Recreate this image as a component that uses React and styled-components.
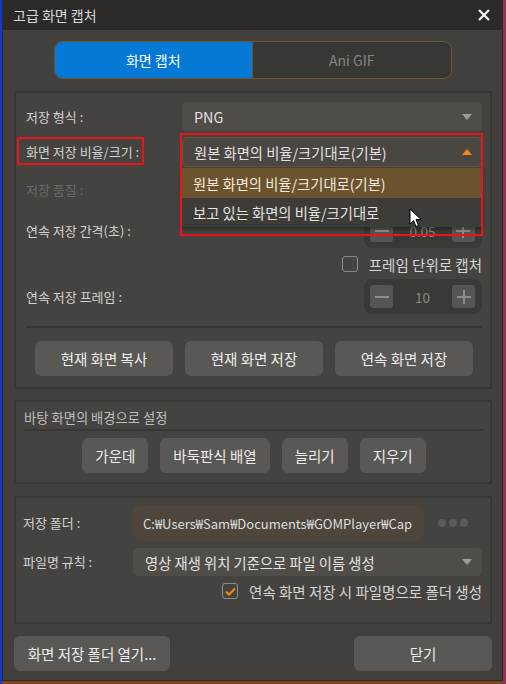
import React from 'react';
import styled, { createGlobalStyle } from 'styled-components';

const GlobalStyle = createGlobalStyle`
	html, body {
		margin: 0;
		padding: 0;
	}

	body {
		background: #1b1a19;
		font-family: "Noto Sans CJK KR", "Noto Sans", "Liberation Sans", sans-serif;
		font-size: 13px;
	}
`;

const Desktop = styled.div`
	width: 506px;
	height: 684px;
	display: flex;
	background:
		linear-gradient(to right, #1638c8 0 2px, transparent 2px),
		linear-gradient(to left, #9c2f57 0 3px, transparent 3px),
		linear-gradient(to bottom, transparent 681px, #7e4424 681px),
		#1b1a19;
`;

const Window = styled.div`
	margin-left: 2px;
	width: 501px;
	height: 681px;
	background: #42403d;
	display: flex;
	flex-direction: column;
	box-shadow: inset 0 0 0 1px #2a2826;
`;

const TitleBar = styled.div`
	height: 30px;
	flex: none;
	display: flex;
	align-items: center;
	justify-content: space-between;
	padding: 0 13px 0 11px;
	background: #2c2a27;
	color: #d8d8d8;
	font-size: 14px;
`;

const TabSwitch = styled.div`
	margin: 11px auto 0;
	width: 398px;
	height: 38px;
	flex: none;
	display: flex;
	box-sizing: border-box;
	border: 1px solid #6b5738;
	border-radius: 8px;
	overflow: hidden;
	background: #393733;
`;

const Tab = styled.div`
	flex: 1;
	display: flex;
	align-items: center;
	justify-content: center;
	font-size: 14px;
	background: ${p => (p.$active ? '#0678d6' : 'transparent')};
	color: ${p => (p.$active ? '#ffffff' : '#858380')};
	& + & {
		border-left: 1px solid #6b5738;
	}
`;

const Panel = styled.div`
	margin: ${p => p.$mt}px 11px 0 12px;
	flex: none;
	box-sizing: border-box;
	height: ${p => p.$h}px;
	border: 2px solid #393734;
	background: #45433f;
	padding: 0 ${p => p.$pr}px 0 ${p => p.$pl}px;
	display: flex;
	flex-direction: column;
`;

const Row = styled.div`
	margin-top: ${p => p.$mt}px;
	height: ${p => p.$h}px;
	flex: none;
	display: grid;
	grid-template-columns: ${p => p.$label}px 1fr;
	align-items: center;
`;

const EndRow = styled.div`
	margin-top: ${p => p.$mt}px;
	height: ${p => p.$h}px;
	flex: none;
	display: flex;
	align-items: center;
	justify-content: flex-end;
	gap: 11px;
	color: #d6d6d6;
	font-size: 14.5px;
`;

const Label = styled.span`
	position: relative;
	justify-self: start;
	color: ${p => (p.$disabled ? '#6b6966' : '#d2d2d2')};
	line-height: 18px;

	${p =>
		p.$marked &&
		`
		&::after {
			content: '';
			position: absolute;
			left: -9px;
			right: -5px;
			top: -6px;
			bottom: -4px;
			border: 2px solid #e8141a;
		}
	`}
`;

const Select = styled.div`
	position: relative;
	height: 100%;
	box-sizing: border-box;
	display: flex;
	align-items: center;
	justify-content: space-between;
	padding: 0 9px 0 11px;
	border-radius: 5px;
	background: ${p => (p.$open ? '#4a4642' : '#504d49')};
	border: 1px solid ${p => (p.$open ? '#6a5536' : '#504d49')};
	color: #e2e2e2;
	font-size: 14.3px;
`;

const Dropdown = styled.div`
	position: absolute;
	top: calc(100% + 2px);
	left: -1px;
	right: -1px;
	z-index: 5;
	box-shadow: 0 2px 4px rgba(0, 0, 0, 0.4);
`;

const Option = styled.div`
	height: ${p => p.$h}px;
	display: flex;
	align-items: center;
	padding-left: 11px;
	background: ${p => (p.$active ? '#6c532f' : '#3e3c39')};
	color: ${p => (p.$active ? '#f2e9da' : '#e2e2e2')};
`;

const Highlight = styled.div`
	position: absolute;
	left: -3px;
	top: -5px;
	width: 303px;
	height: 103px;
	box-sizing: border-box;
	border: 2px solid #e8141a;
	z-index: 6;
	pointer-events: none;
`;

const Cursor = styled.svg`
	position: absolute;
	left: 227px;
	top: 40px;
	z-index: 7;
`;

const Spinner = styled.div`
	justify-self: end;
	width: 118px;
	height: 35px;
	box-sizing: border-box;
	display: flex;
	align-items: center;
	justify-content: space-between;
	padding: 0 7px 0 6px;
	border-radius: 8px;
	background: #3b3936;
	color: #8b8985;
	font-size: 13.5px;
`;

const StepButton = styled.div`
	width: 23px;
	height: 23px;
	border-radius: 3px;
	background: #575551;
	display: flex;
	align-items: center;
	justify-content: center;
`;

const Checkbox = styled.div`
	width: 16px;
	height: 16px;
	box-sizing: border-box;
	border: 1.5px solid #8e8c89;
	border-radius: 3px;
	display: flex;
	align-items: center;
	justify-content: center;
`;

const Separator = styled.div`
	margin-top: ${p => p.$mt}px;
	height: 2px;
	flex: none;
	background: #383633;
`;

const ButtonRow = styled.div`
	margin-top: ${p => p.$mt}px;
	flex: none;
	display: flex;
	justify-content: center;
	gap: 12px;
`;

const Button = styled.div`
	height: 35px;
	width: ${p => (p.$w ? `${p.$w}px` : 'auto')};
	padding: 0 13px;
	box-sizing: border-box;
	display: flex;
	align-items: center;
	justify-content: center;
	border-radius: 6px;
	background: #5a5854;
	color: #ececec;
	font-size: 14.5px;
	white-space: nowrap;
`;

const GroupTitle = styled.div`
	margin-top: 8px;
	height: 16px;
	line-height: 16px;
	color: #bdbdbd;
	font-size: 13.3px;
`;

const PathRow = styled.div`
	display: flex;
	align-items: center;
	height: 100%;
`;

const PathField = styled.div`
	width: 291px;
	height: 100%;
	box-sizing: border-box;
	display: flex;
	align-items: center;
	padding-left: 10px;
	border-radius: 8px;
	background: #4e463d;
	color: #dedede;
	white-space: nowrap;
	overflow: hidden;
`;

const Dots = styled.div`
	flex: 1;
	display: flex;
	justify-content: center;
	gap: 3px;

	& span {
		width: 8px;
		height: 8px;
		border-radius: 50%;
		background: #5c5a57;
	}
`;

const Footer = styled.div`
	margin: 12px 11px 0 12px;
	display: flex;
	justify-content: space-between;
`;

const Arrow = ({ up, color }) => (
	<svg width="10" height="6" viewBox="0 0 10 6">
		<path d={up ? 'M0 6 L5 0 L10 6 Z' : 'M0 0 L10 0 L5 6 Z'} fill={color} />
	</svg>
);

const Minus = () => (
	<svg width="14" height="14" viewBox="0 0 14 14">
		<path d="M0 7 H14" stroke="#8f8d8a" strokeWidth="2" />
	</svg>
);

const Plus = () => (
	<svg width="14" height="14" viewBox="0 0 14 14">
		<path d="M0 7 H14 M7 0 V14" stroke="#8f8d8a" strokeWidth="2" />
	</svg>
);

const NumberSpinner = ({ value }) => (
	<Spinner>
		<StepButton>
			<Minus />
		</StepButton>
		<span>{value}</span>
		<StepButton>
			<Plus />
		</StepButton>
	</Spinner>
);

export default function App() {
	return (
		<Desktop>
			<GlobalStyle />
			<Window>
				<TitleBar>
					<span>고급 화면 캡처</span>
					<svg width="12" height="12" viewBox="0 0 12 12">
						<path d="M1 1 L11 11 M11 1 L1 11" stroke="#f2f2f2" strokeWidth="2.2" />
					</svg>
				</TitleBar>

				<TabSwitch>
					<Tab $active>화면 캡처</Tab>
					<Tab>Ani GIF</Tab>
				</TabSwitch>

				<Panel $mt={12} $h={298} $pl={10} $pr={8}>
					<Row $mt={9} $h={29} $label={156}>
						<Label>저장 형식 :</Label>
						<Select>
							<span>PNG</span>
							<Arrow color="#9d9b98" />
						</Select>
					</Row>
					<Row $mt={6} $h={30} $label={156}>
						<Label $marked>화면 저장 비율/크기 :</Label>
						<Select $open>
							<span>원본 화면의 비율/크기대로(기본)</span>
							<Arrow up color="#ef8a14" />
							<Highlight />
							<Dropdown>
								<Option $active $h={30}>원본 화면의 비율/크기대로(기본)</Option>
								<Option $h={29}>보고 있는 화면의 비율/크기대로</Option>
								<Cursor width="13" height="20" viewBox="0 0 13 20">
									<path
										d="M1 1 L1 16 L4.5 12.5 L7 18.5 L9.5 17.5 L7 11.5 L12 11.5 Z"
										fill="#ffffff"
										stroke="#000000"
										strokeWidth="1"
										strokeLinejoin="round"
									/>
								</Cursor>
							</Dropdown>
						</Select>
					</Row>
					<Row $mt={8} $h={30} $label={156}>
						<Label $disabled>저장 품질 :</Label>
					</Row>
					<Row $mt={8} $h={35} $label={156}>
						<Label>연속 저장 간격(초) :</Label>
						<NumberSpinner value="0.05" />
					</Row>
					<EndRow $mt={8} $h={16}>
						<Checkbox />
						<span>프레임 단위로 캡처</span>
					</EndRow>
					<Row $mt={7} $h={35} $label={156}>
						<Label>연속 저장 프레임 :</Label>
						<NumberSpinner value="10" />
					</Row>
					<Separator $mt={12} />
					<ButtonRow $mt={13}>
						<Button $w={138}>현재 화면 복사</Button>
						<Button $w={138}>현재 화면 저장</Button>
						<Button $w={138}>연속 화면 저장</Button>
					</ButtonRow>
				</Panel>

				<Panel $mt={11} $h={84} $pl={8} $pr={6}>
					<GroupTitle>바탕 화면의 배경으로 설정</GroupTitle>
					<Separator $mt={3} />
					<ButtonRow $mt={7}>
						<Button>가운데</Button>
						<Button>바둑판식 배열</Button>
						<Button>늘리기</Button>
						<Button>지우기</Button>
					</ButtonRow>
				</Panel>

				<Panel $mt={12} $h={128} $pl={7} $pr={8}>
					<Row $mt={7} $h={36} $label={110}>
						<Label>저장 폴더 :</Label>
						<PathRow>
							<PathField>C:₩Users₩Sam₩Documents₩GOMPlayer₩Cap</PathField>
							<Dots>
								<span />
								<span />
								<span />
							</Dots>
						</PathRow>
					</Row>
					<Row $mt={7} $h={28} $label={110}>
						<Label>파일명 규칙 :</Label>
						<Select>
							<span>영상 재생 위치 기준으로 파일 이름 생성</span>
							<Arrow color="#9d9b98" />
						</Select>
					</Row>
					<EndRow $mt={7} $h={16}>
						<Checkbox>
							<svg width="11" height="9" viewBox="0 0 11 9">
								<path d="M1 4.5 L4 7.5 L10 1.5" fill="none" stroke="#ef8a14" strokeWidth="2.2" />
							</svg>
						</Checkbox>
						<span>연속 화면 저장 시 파일명으로 폴더 생성</span>
					</EndRow>
				</Panel>

				<Footer>
					<Button $w={156}>화면 저장 폴더 열기...</Button>
					<Button $w={138}>닫기</Button>
				</Footer>
			</Window>
		</Desktop>
	);
}
